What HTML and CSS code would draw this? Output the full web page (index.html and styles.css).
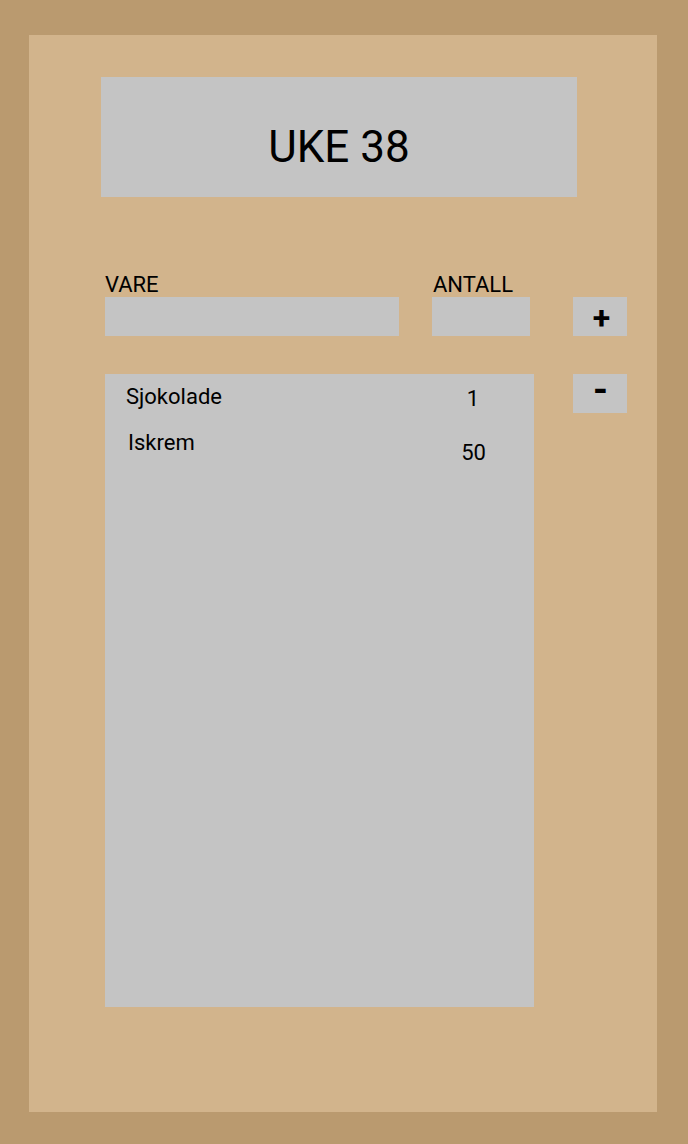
FILE: index.html
```html
<!DOCTYPE html>
<html lang="no">
<head>
<meta charset="utf-8">
<title>Handleliste – Uke 38</title>
<link rel="stylesheet" href="styles.css">
</head>
<body>
<main class="panel">
  <header class="title">UKE 38</header>
  <section class="entry">
    <label class="label" for="vare">VARE</label>
    <label class="label label-qty" for="antall">ANTALL</label>
    <span></span>
    <input class="field" id="vare" type="text">
    <input class="field" id="antall" type="text">
    <button class="btn btn-plus" type="button">+</button>
  </section>
  <section class="listing">
    <ul class="list">
      <li class="row"><span class="name">Sjokolade</span><span class="qty">1</span></li>
      <li class="row"><span class="name">Iskrem</span><span class="qty">50</span></li>
    </ul>
    <button class="btn btn-minus" type="button">-</button>
  </section>
</main>
</body>
</html>
```
FILE: styles.css
```css
html, body {
  margin: 0;
  padding: 0;
}
body {
  background: #ba9a6f;
  padding: 35px 31px 32px 29px;
  font-family: Roboto, "Liberation Sans", sans-serif;
  color: #000;
}
.panel {
  width: 628px;
  height: 1077px;
  background: #d2b48c;
  box-sizing: border-box;
  padding-top: 42px;
}
.title {
  margin-left: 72px;
  width: 476px;
  height: 120px;
  box-sizing: border-box;
  padding-top: 19px;
  background: #c4c4c4;
  display: flex;
  align-items: center;
  justify-content: center;
  font-size: 44px;
  font-weight: 400;
}
.entry {
  margin: 77px 0 0 76px;
  display: grid;
  grid-template-columns: 294px 98px 54px;
  grid-template-rows: 22px 39px;
  column-gap: 33px;
  row-gap: 1px;
}
.label {
  font-size: 22px;
  line-height: 22px;
  white-space: nowrap;
}
.label-qty {
  padding-left: 1px;
}
.field {
  border: 0;
  padding: 0;
  margin: 0;
  height: 39px;
  width: 100%;
  background: #c4c4c4;
  font: inherit;
  font-size: 22px;
  outline: none;
}
.btn {
  border: 0;
  margin: 0;
  padding: 0;
  width: 54px;
  height: 39px;
  background: #c4c4c4;
  font-family: Roboto, "Liberation Sans", sans-serif;
  font-weight: 700;
  color: #000;
  display: flex;
  align-items: center;
  justify-content: center;
  line-height: 1;
}
.btn-plus {
  margin-left: 10px;
  font-size: 32px;
  padding: 3px 0 0 3px;
}
.btn-minus {
  font-size: 38px;
  padding: 0 0 7px 1px;
}
.listing {
  margin: 38px 0 0 76px;
  display: flex;
  align-items: flex-start;
  gap: 39px;
}
.list {
  list-style: none;
  margin: 0;
  width: 429px;
  height: 633px;
  box-sizing: border-box;
  padding: 12px 0 0 21px;
  background: #c4c4c4;
  display: flex;
  flex-direction: column;
  gap: 22px;
}
.row {
  display: grid;
  grid-template-columns: 317px 60px;
  font-size: 22px;
  line-height: 22px;
  align-items: start;
}
.qty {
  text-align: center;
  padding-top: 2px;
}
.row + .row .name {
  padding-left: 2px;
}
.row + .row .qty {
  padding-top: 10px;
  margin-left: 1px;
}
```
